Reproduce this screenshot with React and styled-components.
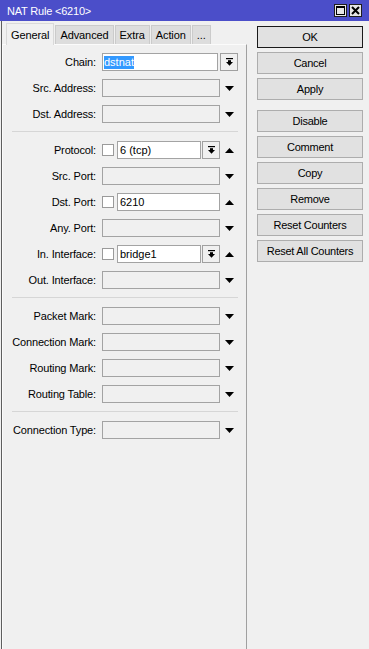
import React from "react";
import styled, { createGlobalStyle } from "styled-components";

const GlobalStyle = createGlobalStyle`
  html, body, #root { height: 100%; margin: 0; padding: 0; }
  body {
    background: #f0f0f0;
    font-family: "Liberation Sans", Arial, sans-serif;
    font-size: 11px;
    color: #000;
    overflow: hidden;
  }
  * { box-sizing: border-box; }
`;

const Window = styled.div`
  display: flex;
  flex-direction: column;
  height: 100%;
  background: #f0f0f0;
`;

const TitleBar = styled.div`
  flex: none;
  height: 21px;
  background: #4b4ec9;
  display: flex;
  align-items: center;
  padding: 0 7px 0 7px;
`;

const Title = styled.div`
  flex: 1;
  color: #fff;
  font-size: 11px;
  letter-spacing: -0.2px;
`;

const TitleButtons = styled.div`
  display: flex;
  gap: 2px;
`;

const TitleButton = styled.div`
  width: 13px;
  height: 13px;
  background: #e6e6e6;
  border: 1px solid #1e1e1e;
  display: flex;
  align-items: center;
  justify-content: center;
`;

const Body = styled.div`
  flex: 1;
  min-height: 0;
  display: flex;
  margin-left: 1px;
  border-left: 1px solid #5e5e5e;
`;

const LeftPane = styled.div`
  flex: none;
  width: 245px;
  display: flex;
  flex-direction: column;
`;

const TabStrip = styled.div`
  flex: none;
  height: 23px;
  display: flex;
  align-items: flex-end;
  gap: 1px;
  padding-left: 4px;
`;

const Tab = styled.div`
  position: relative;
  z-index: ${(p) => (p.$active ? 1 : 0)};
  height: ${(p) => (p.$active ? 22 : 19)}px;
  margin-bottom: ${(p) => (p.$active ? -1 : 0)}px;
  padding: 0 4px;
  display: flex;
  align-items: center;
  justify-content: center;
  background: ${(p) => (p.$active ? "#f0f0f0" : "#dddddd")};
  border: 1px solid ${(p) => (p.$active ? "#d9d9d9" : "#cbcbcb")};
  border-bottom: none;
  white-space: nowrap;
  letter-spacing: -0.1px;
`;

const Panel = styled.div`
  flex: 1;
  display: flex;
  flex-direction: column;
  padding-top: 8px;
  border-top: 1px solid #fbfbfb;
  border-left: 1px solid #fbfbfb;
  border-right: 1px solid #a0a0a0;
`;

const Section = styled.div`
  display: flex;
  flex-direction: column;
  gap: 8px;
`;

const Separator = styled.div`
  height: 1px;
  background: #d6d6d6;
  margin: 8px 8px 9px 9px;
`;

const Row = styled.div`
  display: flex;
  align-items: center;
  height: 18px;
`;

const Label = styled.div`
  flex: none;
  width: 93px;
  margin-right: 6px;
  text-align: right;
  white-space: nowrap;
  letter-spacing: -0.15px;
`;

const Checkbox = styled.div`
  flex: none;
  width: 12px;
  height: 12px;
  margin-right: 3px;
  background: #fff;
  border: 1px solid #9a9a9a;
`;

const Field = styled.div`
  flex: none;
  width: ${(p) => p.$w}px;
  height: 18px;
  border: 1px solid #a3a3a3;
  background: ${(p) => (p.$filled ? "#fff" : "#f0f0f0")};
  padding-left: 2px;
  display: flex;
  align-items: center;
  white-space: nowrap;
  overflow: hidden;
`;

const Selected = styled.span`
  display: inline-block;
  margin-left: -1px;
  line-height: 13px;
  background: #3399ff;
  color: #fff;
`;

const DropButton = styled.div`
  flex: none;
  width: 18px;
  height: 18px;
  margin-left: ${(p) => p.$gap}px;
  border: 1px solid #a0a0a0;
  background: #f0f0f0;
  display: flex;
  align-items: center;
  justify-content: center;
`;

const ArrowBox = styled.div`
  flex: none;
  margin-left: 5px;
  display: flex;
  align-items: center;
`;

const ButtonColumn = styled.div`
  flex: 1;
  display: flex;
  flex-direction: column;
  gap: 4px;
  padding: 5px 0 0 10px;
`;

const ActionButton = styled.div`
  width: 106px;
  height: 22px;
  margin-top: ${(p) => (p.$spaced ? 6 : 0)}px;
  border: 1px solid ${(p) => (p.$default ? "#1a1a1a" : "#adadad")};
  background: #e1e1e1;
  display: flex;
  align-items: center;
  justify-content: center;
  letter-spacing: -0.25px;
  white-space: nowrap;
`;

const MaxIcon = () => (
  <svg width="9" height="9" viewBox="0 0 9 9">
    <rect x="0.5" y="0.5" width="8" height="8" fill="none" stroke="#000" />
    <rect x="0" y="0" width="9" height="2" fill="#000" />
  </svg>
);

const CloseIcon = () => (
  <svg width="9" height="9" viewBox="0 0 9 9">
    <path d="M1 1 L8 8 M8 1 L1 8" stroke="#000" strokeWidth="2" />
  </svg>
);

const DropIcon = () => (
  <svg width="7" height="8" viewBox="0 0 7 8">
    <rect x="0" y="0" width="7" height="1.2" fill="#000" />
    <rect x="2" y="2.2" width="3" height="2" fill="#000" />
    <polygon points="0,4 7,4 3.5,7.8" fill="#000" />
  </svg>
);

const Triangle = ({ up }) => (
  <svg width="9" height="5" viewBox="0 0 9 5">
    <polygon points={up ? "0,5 9,5 4.5,0" : "0,0 9,0 4.5,5"} fill="#000" />
  </svg>
);

const sections = [
  [
    { label: "Chain:", kind: "chain", value: "dstnat" },
    { label: "Src. Address:", kind: "empty" },
    { label: "Dst. Address:", kind: "empty" },
  ],
  [
    { label: "Protocol:", kind: "checkCombo", value: "6 (tcp)" },
    { label: "Src. Port:", kind: "empty" },
    { label: "Dst. Port:", kind: "checkText", value: "6210" },
    { label: "Any. Port:", kind: "empty" },
    { label: "In. Interface:", kind: "checkCombo", value: "bridge1" },
    { label: "Out. Interface:", kind: "empty" },
  ],
  [
    { label: "Packet Mark:", kind: "empty" },
    { label: "Connection Mark:", kind: "empty" },
    { label: "Routing Mark:", kind: "empty" },
    { label: "Routing Table:", kind: "empty" },
  ],
  [{ label: "Connection Type:", kind: "empty" }],
];

const FormRow = ({ row }) => {
  const { label, kind, value } = row;
  if (kind === "chain") {
    return (
      <Row>
        <Label>{label}</Label>
        <Field $w={116} $filled>
          <Selected>{value}</Selected>
        </Field>
        <DropButton $gap={2}>
          <DropIcon />
        </DropButton>
      </Row>
    );
  }
  if (kind === "checkCombo") {
    return (
      <Row>
        <Label>{label}</Label>
        <Checkbox />
        <Field $w={84} $filled>
          {value}
        </Field>
        <DropButton $gap={1}>
          <DropIcon />
        </DropButton>
        <ArrowBox>
          <Triangle up />
        </ArrowBox>
      </Row>
    );
  }
  if (kind === "checkText") {
    return (
      <Row>
        <Label>{label}</Label>
        <Checkbox />
        <Field $w={103} $filled>
          {value}
        </Field>
        <ArrowBox>
          <Triangle up />
        </ArrowBox>
      </Row>
    );
  }
  return (
    <Row>
      <Label>{label}</Label>
      <Field $w={118} />
      <ArrowBox>
        <Triangle />
      </ArrowBox>
    </Row>
  );
};

const tabs = ["General", "Advanced", "Extra", "Action", "..."];

const buttons = [
  { text: "OK", def: true },
  { text: "Cancel" },
  { text: "Apply" },
  { text: "Disable", spaced: true },
  { text: "Comment" },
  { text: "Copy" },
  { text: "Remove" },
  { text: "Reset Counters" },
  { text: "Reset All Counters" },
];

export default function App() {
  return (
    <>
      <GlobalStyle />
      <Window>
        <TitleBar>
          <Title>NAT Rule &lt;6210&gt;</Title>
          <TitleButtons>
            <TitleButton>
              <MaxIcon />
            </TitleButton>
            <TitleButton>
              <CloseIcon />
            </TitleButton>
          </TitleButtons>
        </TitleBar>
        <Body>
          <LeftPane>
            <TabStrip>
              {tabs.map((t, i) => (
                <Tab key={t} $active={i === 0}>
                  {t}
                </Tab>
              ))}
            </TabStrip>
            <Panel>
              {sections.map((sec, si) => (
                <React.Fragment key={si}>
                  {si > 0 && <Separator />}
                  <Section>
                    {sec.map((r) => (
                      <FormRow key={r.label} row={r} />
                    ))}
                  </Section>
                </React.Fragment>
              ))}
            </Panel>
          </LeftPane>
          <ButtonColumn>
            {buttons.map((b) => (
              <ActionButton key={b.text} $default={b.def} $spaced={b.spaced}>
                {b.text}
              </ActionButton>
            ))}
          </ButtonColumn>
        </Body>
      </Window>
    </>
  );
}
